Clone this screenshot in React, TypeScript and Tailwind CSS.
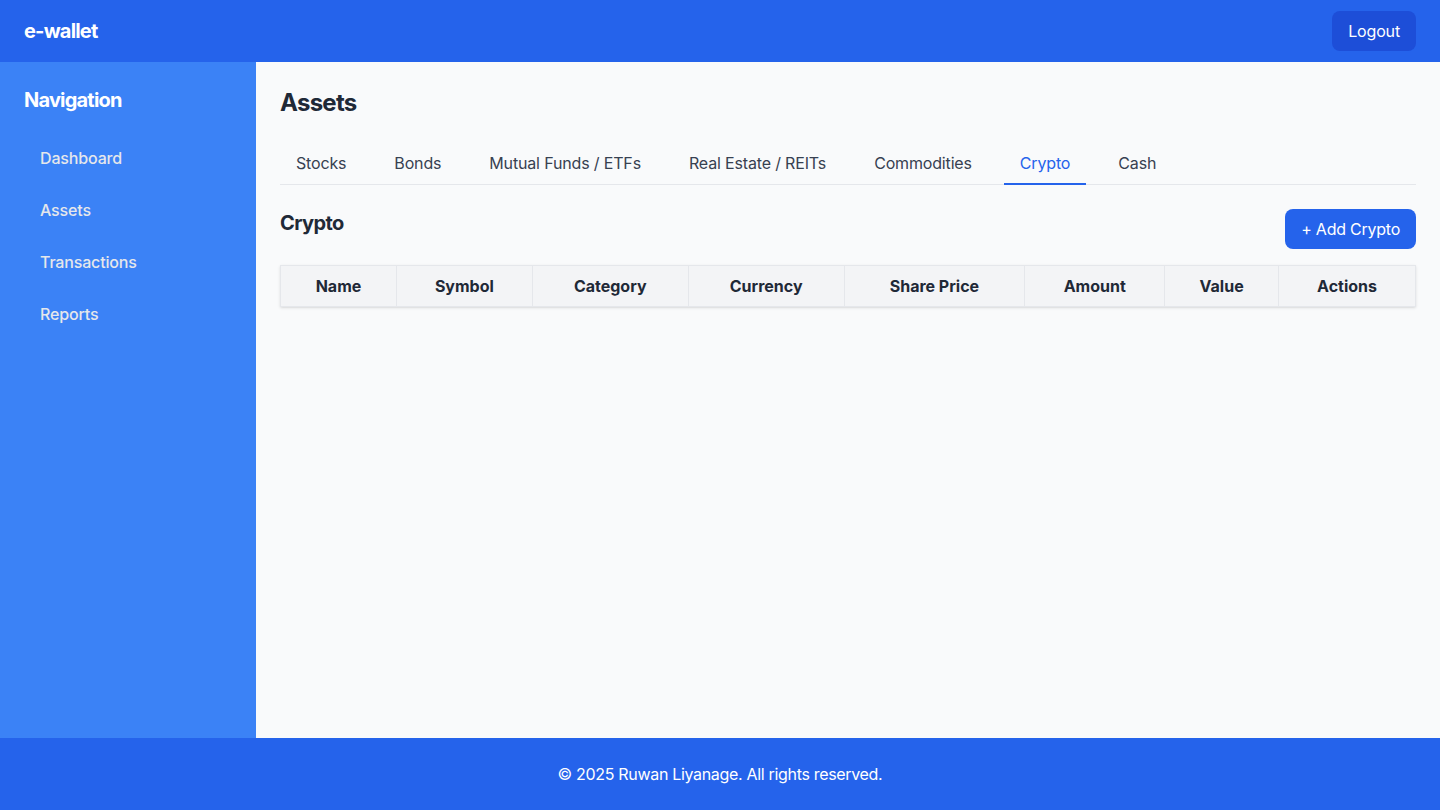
const tabs = ["Stocks", "Bonds", "Mutual Funds / ETFs", "Real Estate / REITs", "Commodities", "Crypto", "Cash"];

const navItems = ["Dashboard", "Assets", "Transactions", "Reports"];

const columns = [
    { label: "Name", width: "w-[116px]" },
    { label: "Symbol", width: "w-[136px]" },
    { label: "Category", width: "w-[156px]" },
    { label: "Currency", width: "w-[156px]" },
    { label: "Share Price", width: "w-[181px]" },
    { label: "Amount", width: "w-[140px]" },
    { label: "Value", width: "w-[114px]" },
    { label: "Actions", width: "w-[137px]" },
];

const Header = () => (
    <header className="flex items-center justify-between h-[62px] px-6 bg-[#2563eb] text-white">
        <h1 className="text-xl font-bold tracking-[-0.04em]">e-wallet</h1>
        <button className="px-4 py-2 text-base tracking-[-0.01em] bg-[#1d4ed8] rounded-lg">
            Logout
        </button>
    </header>
);

const Sidebar = () => (
    <aside className="w-64 shrink-0 p-6 bg-[#3b82f6] text-white">
        <h2 className="text-xl font-bold tracking-[-0.04em] mb-5">Navigation</h2>
        <ul className="flex flex-col gap-1">
            {navItems.map((item) => (
                <li
                    key={item}
                    className="px-4 py-3 text-base font-medium tracking-[-0.01em] text-[#e5e7eb]">
                    {item}
                </li>
            ))}
        </ul>
    </aside>
);

export default function App() {
    const active = "Crypto";

    return (
        <div
            className="flex flex-col min-h-screen"
            style={{ fontFamily: "Inter, 'Noto Sans', sans-serif" }}>
            <Header />
            <div className="flex flex-1">
                <Sidebar />
                <main className="flex-1 px-6 pt-[25px] pb-6 bg-[#f9fafb]">
                    <h1 className="text-2xl font-bold tracking-[-0.03em] text-[#1f2937] mb-6">
                        Assets
                    </h1>

                    <div className="flex gap-4 border-b border-[#e5e7eb]">
                        {tabs.map((tab) => (
                            <button
                                key={tab}
                                className={`px-4 py-2 text-base tracking-[-0.01em] -mb-px border-b-2 ${
                                    tab === active
                                        ? "border-[#2563eb] text-[#2563eb]"
                                        : "border-transparent text-[#374151]"
                                }`}>
                                {tab}
                            </button>
                        ))}
                    </div>

                    <div className="flex items-start justify-between mt-6 mb-4">
                        <h2 className="text-xl font-bold tracking-[-0.03em] text-[#1f2937]">
                            Crypto
                        </h2>
                        <button className="px-4 py-2 text-base tracking-[-0.015em] text-white bg-[#2563eb] rounded-lg">
                            + Add Crypto
                        </button>
                    </div>

                    <table className="w-full border-collapse bg-white shadow">
                        <thead>
                            <tr className="bg-[#f3f4f6]">
                                {columns.map((col) => (
                                    <th
                                        key={col.label}
                                        className={`${col.width} px-4 py-2 text-base font-bold text-[#1f2937] border border-[#e5e7eb]`}>
                                        {col.label}
                                    </th>
                                ))}
                            </tr>
                        </thead>
                        <tbody></tbody>
                    </table>
                </main>
            </div>
            <footer className="p-6 text-center text-base tracking-[-0.02em] text-white bg-[#2563eb]">
                © 2025 Ruwan Liyanage. All rights reserved.
            </footer>
        </div>
    );
}
